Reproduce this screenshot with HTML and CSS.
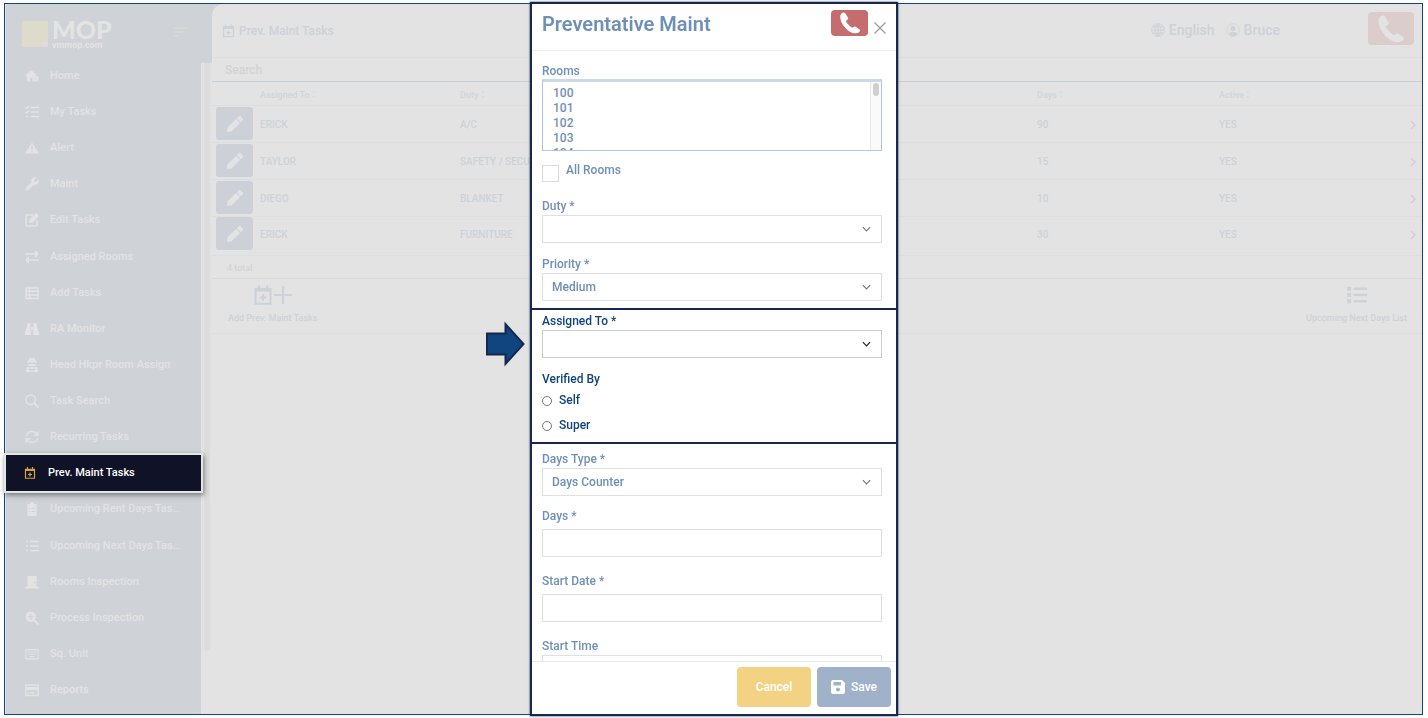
FILE: index.html
```
<!DOCTYPE html>
<html lang="en">
<head>
  <meta charset="UTF-8" />
  <title>Prev. Maint Tasks</title>
  <link rel="stylesheet" href="styles.css">
</head>
<body>

<svg class="sprite" aria-hidden="true">
  <symbol id="phone" viewBox="0 0 66 68"><path fill="currentColor" d="M8 3C12 0 17 1 19 5L27 18C28 21 27 23 24 25L20 28C24 36 32 44 40 49L45 46C47 44 50 44 53 47L63 54C66 58 62 63 56 65C48 67 40 66 34 62C18 52 5 36 3 18C2 12 4 6 8 3Z"/></symbol>
  <symbol id="pencil" viewBox="0 0 512 512"><path fill="currentColor" d="M290.7 93.2l128 128-278 278-114.1 12.6C11.4 513.5-1.6 500.6.1 485.3l12.7-114.2 277.9-277.9zm207.2-19l-60.1-60.1c-18.8-18.8-49.2-18.8-67.9 0l-56.6 56.5 128 128 56.6-56.5c18.7-18.8 18.7-49.2 0-67.9z"/></symbol>
  <symbol id="calendar" viewBox="0 0 24 24"><path fill="none" stroke="currentColor" stroke-width="2.4" d="M3 4.500h18v18H3zM7 0v5M17 0v5M12 11v8M8 15h8"/><path fill="currentColor" d="M3 4h18v4H3z"/></symbol>
  <symbol id="list" viewBox="0 0 24 20"><path fill="currentColor" d="M0 0h5v5H0zM0 7.500h5v5H0zM0 15h5v5H0zM8 1h16v3H8zM8 8.500h16v3H8zM8 16h16v3H8z"/></symbol>
  <symbol id="chevron" viewBox="0 0 10 6"><path fill="none" stroke="currentColor" stroke-width="1.300" d="M1 1l4 4 4-4"/></symbol>
  <symbol id="next" viewBox="0 0 6 10"><path fill="none" stroke="currentColor" stroke-width="1.500" d="M1 1l4 4-4 4"/></symbol>
  <symbol id="sort" viewBox="0 0 6 10"><path fill="none" stroke="currentColor" d="M1 3l2-2 2 2M1 7l2 2 2-2"/></symbol>
</svg>

<div class="app">
  <aside class="sidebar">
    <div class="brand">
      <div class="logo-mark"></div>
      <div class="logo-text"><strong>MOP</strong><span>vmmop.com</span></div>
      <svg class="menu-icon" viewBox="0 0 14 10"><path fill="none" stroke="currentColor" stroke-width="1.400" d="M0 1h14M0 5h9M0 9h5"/></svg>
    </div>
    <div class="side-body">
      <nav class="nav">
        <a href="#"><svg viewBox="0 0 16 14"><path fill="currentColor" d="M7 0L0 6.500h2V13h4V9h2v4h1.500A4 4 0 0 1 12 6.200L14 6z"/><circle cx="12" cy="10" r="3.500" fill="currentColor"/><path fill="none" stroke="#cfd2d7" d="M10.500 10l1 1 2-2"/></svg>Home</a>
        <a href="#"><svg viewBox="0 0 14 14"><path fill="none" stroke="currentColor" stroke-width="1.500" d="M5.500 2.500H14M5.500 7H14M5.500 11.500H14M.5 2.500l1 1 2.500-2.500M.5 7l1 1L4 5.500M1 11.500h2"/></svg>My Tasks</a>
        <a href="#"><svg viewBox="0 0 14 14"><path fill="currentColor" d="M7 1.500L0 12.500h14z"/><path stroke="#cfd2d7" stroke-width="1.500" d="M7 5v4M7 10v1.500"/></svg>Alert</a>
        <a href="#"><svg viewBox="0 0 512 512"><path fill="currentColor" d="M507.700 109.100c-2.200-9-13.500-12.100-20.100-5.500l-74.400 74.400-67.900-11.300L334 98.900l74.400-74.400c6.600-6.600 3.400-17.900-5.700-20.200-47.400-11.700-99.600.9-136.600 37.900-39.600 39.600-50.600 97.100-34.100 147.200L18.700 402.800c-25 25-25 65.500 0 90.500s65.500 25 90.500 0l213.200-213.200c50.100 16.700 107.500 5.700 147.400-34.200 37.100-37.100 49.700-89.300 37.900-136.800zM64 472a24 24 0 1 1 0-48 24 24 0 0 1 0 48z"/></svg>Maint</a>
        <a href="#"><svg viewBox="0 0 14 14"><path fill="none" stroke="currentColor" stroke-width="1.600" d="M8 2H2.500Q1 2 1 3.500v8Q1 13 2.500 13h8Q12 13 12 11.500V7.500"/><path fill="currentColor" d="M11 0l3 3-6.500 6.500L4 10l.5-3.500z"/></svg>Edit Tasks</a>
        <a href="#"><svg viewBox="0 0 14 14"><path fill="none" stroke="currentColor" stroke-width="1.700" d="M0 4h11M3 10h11"/><path fill="currentColor" d="M10 0l4 4-4 4zM4 6l-4 4 4 4z"/></svg>Assigned Rooms</a>
        <a href="#"><svg viewBox="0 0 14 14"><path fill="none" stroke="currentColor" stroke-width="1.400" d="M1 2h12v10.500H1zM1 5.300h12M1 9h12M4.500 2v10.500"/></svg>Add Tasks</a>
        <a href="#"><svg viewBox="0 0 14 14"><path fill="currentColor" d="M2.500 1h3v2.500L6 13H0v-2.500L2 4zM8.500 1h3v3l2.500 6.500V13H8l.5-9.500zM6 5h2v3H6z"/></svg>RA Monitor</a>
        <a href="#"><svg viewBox="0 0 14 14"><path fill="currentColor" d="M4.500 0h5l1 3H12v1.500H2V3h1.500zM3.500 6h7v2h-7zM2 9h10l1 5H1z"/><path stroke="#cfd2d7" d="M5 9l1 5M9 9l-1 5M3 11.500h8"/></svg>Head Hkpr Room Assign</a>
        <a href="#"><svg viewBox="0 0 14 14"><circle cx="5.700" cy="5.700" r="4.700" fill="none" stroke="currentColor" stroke-width="1.500"/><path stroke="currentColor" stroke-width="1.700" d="M9.200 9.200L13.500 13.500"/></svg>Task Search</a>
        <a href="#"><svg viewBox="0 0 14 14"><path fill="none" stroke="currentColor" stroke-width="1.600" d="M1.500 6A5.500 5 0 0 1 12 4.500M12.500 8A5.500 5 0 0 1 2 9.500"/><path fill="currentColor" d="M13.500 1v5h-5zM.5 13V8h5z"/></svg>Recurring Tasks</a>
        <a href="#" class="active"><svg><use href="#calendar"/></svg>Prev. Maint Tasks</a>
        <a href="#"><svg viewBox="0 0 14 14"><path fill="currentColor" d="M2.500 2H5a2 2 0 0 1 4 0h2.500v12h-9z"/><path stroke="#cfd2d7" d="M6.500 6.500H10M6.500 9.500H10M4 6.500h1M4 9.500h1"/></svg>Upcoming Rent Days Tas…</a>
        <a href="#"><svg viewBox="0 0 14 14"><path fill="none" stroke="currentColor" stroke-width="1.500" d="M5 2.500h9M5 7h9M5 11.500h9M1 2.500h2M1 7h2M1 11.500h2"/></svg>Upcoming Next Days Tas…</a>
        <a href="#"><svg viewBox="0 0 14 14"><path fill="currentColor" d="M2.500 1h9v11H14v1.500H0V12h2.500z"/><circle cx="9.500" cy="7.500" r=".8" fill="#cfd2d7"/></svg>Rooms Inspection</a>
        <a href="#"><svg viewBox="0 0 14 14"><circle cx="5.700" cy="5.700" r="5.200" fill="currentColor"/><path stroke="currentColor" stroke-width="2" d="M9 9l4.500 4.500"/><path stroke="#cfd2d7" stroke-width="1.300" d="M3 5.700h5.400M5.700 3v5.400"/></svg>Process Inspection</a>
        <a href="#"><svg viewBox="0 0 16 14"><path fill="none" stroke="currentColor" stroke-width="1.300" d="M1 2h14v10.500H1z"/><path stroke="currentColor" stroke-width="1.500" d="M3 5h2M7 5h2M11 5h2M4 7.300h2M7 7.300h2M10 7.300h2M5 10h6"/></svg>Sq. Unit</a>
        <a href="#"><svg viewBox="0 0 14 14"><path fill="none" stroke="currentColor" stroke-width="1.300" d="M.7 2h12.600v10.500H.7zM2.500 10h2M6 10h3"/><path fill="currentColor" d="M1 4h12v3H1z"/></svg>Reports</a>
      </nav>
      <div class="side-scroll"></div>
    </div>
  </aside>

  <main class="content">
    <header class="topbar">
      <h2><svg><use href="#calendar"/></svg>Prev. Maint Tasks</h2>
      <div class="user">
        <svg viewBox="0 0 14 14"><path fill="none" stroke="currentColor" d="M7 .6a6.400 6.400 0 1 0 0 12.800A6.400 6.400 0 0 0 7 .6zM.6 7h12.800M1.500 3.800h11M1.500 10.200h11M7 .6v12.800M7 .6C3 4 3 10 7 13.400M7 .6c4 3.400 4 9.400 0 12.800"/></svg>
        <span>English</span>
        <svg viewBox="0 0 14 14"><circle cx="7" cy="7" r="6.300" fill="none" stroke="currentColor" stroke-width=".8"/><circle cx="7" cy="5.300" r="2.500" fill="currentColor"/><path fill="currentColor" d="M2.700 11C4 8 10 8 11.300 11 9 13.500 5 13.500 2.700 11z"/></svg>
        <span>Bruce</span>
      </div>
      <button class="call" aria-label="Call"><svg><use href="#phone"/></svg></button>
    </header>
    <input class="search" type="text" placeholder="Search" aria-label="Search">
    <table class="tasks">
      <thead>
        <tr>
          <th class="col-edit"></th>
          <th class="col-assigned">Assigned To <svg><use href="#sort"/></svg></th>
          <th>Duty <svg><use href="#sort"/></svg></th>
          <th class="col-days">Days <svg><use href="#sort"/></svg></th>
          <th class="col-active">Active <svg><use href="#sort"/></svg></th>
          <th class="col-next"></th>
        </tr>
      </thead>
      <tbody>
        <tr><td><button class="edit" aria-label="Edit"><svg><use href="#pencil"/></svg></button></td><td>ERICK</td><td>A/C</td><td>90</td><td>YES</td><td><svg class="next"><use href="#next"/></svg></td></tr>
        <tr><td><button class="edit" aria-label="Edit"><svg><use href="#pencil"/></svg></button></td><td>TAYLOR</td><td>SAFETY / SECURITY</td><td>15</td><td>YES</td><td><svg class="next"><use href="#next"/></svg></td></tr>
        <tr><td><button class="edit" aria-label="Edit"><svg><use href="#pencil"/></svg></button></td><td>DIEGO</td><td>BLANKET</td><td>10</td><td>YES</td><td><svg class="next"><use href="#next"/></svg></td></tr>
        <tr><td><button class="edit" aria-label="Edit"><svg><use href="#pencil"/></svg></button></td><td>ERICK</td><td>FURNITURE</td><td>30</td><td>YES</td><td><svg class="next"><use href="#next"/></svg></td></tr>
      </tbody>
    </table>
    <div class="total">4 total</div>
    <div class="actions">
      <a href="#"><span class="icons"><svg><use href="#calendar"/></svg><svg viewBox="0 0 18 18"><path stroke="currentColor" stroke-width="2" d="M9 1v16M1 9h16"/></svg></span>Add Prev. Maint Tasks</a>
      <a href="#"><span class="icons"><svg><use href="#list"/></svg></span>Upcoming Next Days List</a>
    </div>
  </main>
</div>

<div class="overlay">
  <form class="modal" role="dialog" aria-labelledby="modalTitle">
    <header class="modal-head">
      <h1 id="modalTitle">Preventative Maint</h1>
      <button type="button" class="call" aria-label="Call"><svg><use href="#phone"/></svg></button>
      <button type="button" class="close" aria-label="Close"><svg viewBox="0 0 12 12"><path stroke="currentColor" stroke-width="1.200" d="M.5.5l11 11M11.500.5l-11 11"/></svg></button>
    </header>

    <div class="modal-body">
      <div class="section first">
        <label for="rooms">Rooms</label>
        <div class="listbox">
          <select id="rooms" multiple>
            <option>100</option><option>101</option><option>102</option><option>103</option><option>104</option>
            <option>105</option><option>106</option><option>107</option><option>108</option><option>109</option>
            <option>110</option><option>111</option><option>112</option><option>113</option><option>114</option>
            <option>115</option><option>116</option><option>117</option><option>118</option><option>119</option>
            <option>120</option><option>121</option><option>122</option><option>123</option>
          </select>
          <div class="list-scroll"></div>
        </div>
        <div class="check"><input type="checkbox" id="allRooms"><label for="allRooms">All Rooms</label></div>
        <div class="field">
          <label for="duty">Duty *</label>
          <div class="pick"><select id="duty"><option></option></select><svg><use href="#chevron"/></svg></div>
        </div>
        <div class="field">
          <label for="priority">Priority *</label>
          <div class="pick"><select id="priority"><option>Medium</option></select><svg><use href="#chevron"/></svg></div>
        </div>
      </div>

      <div class="section highlight">
        <svg class="arrow" viewBox="0 0 39 46"><path fill="#10457f" stroke="#16284e" stroke-width="2" d="M1 12.500h18.500V3L37.500 23l-18 20V33.500H1z"/></svg>
        <div class="field">
          <label for="assigned">Assigned To *</label>
          <div class="pick"><select id="assigned"><option></option></select><svg><use href="#chevron"/></svg></div>
        </div>
        <fieldset>
          <legend>Verified By</legend>
          <div class="radio"><input type="radio" name="verified" id="self"><label for="self">Self</label></div>
          <div class="radio"><input type="radio" name="verified" id="super"><label for="super">Super</label></div>
        </fieldset>
      </div>

      <div class="section last">
        <div class="field">
          <label for="daysType">Days Type *</label>
          <div class="pick"><select id="daysType"><option>Days Counter</option></select><svg><use href="#chevron"/></svg></div>
        </div>
        <div class="field wide">
          <label for="days">Days *</label>
          <input type="text" id="days">
        </div>
        <div class="field wide">
          <label for="startDate">Start Date *</label>
          <input type="text" id="startDate">
        </div>
        <div class="field">
          <label for="startTime">Start Time</label>
          <input type="text" id="startTime">
        </div>
      </div>
    </div>

    <footer class="modal-foot">
      <button type="button" class="btn cancel">Cancel</button>
      <button type="submit" class="btn save"><svg viewBox="0 0 14 14"><path fill="currentColor" fill-rule="evenodd" d="M2 0h9l3 3v9a2 2 0 0 1-2 2H2a2 2 0 0 1-2-2V2a2 2 0 0 1 2-2zm.5 2v3.500H10V2zM7 7.500a2 2 0 1 0 0 4 2 2 0 0 0 0-4z"/></svg>Save</button>
    </footer>
  </form>
</div>

</body>
</html>
```
FILE: styles.css
```
* { box-sizing: border-box; }
body { margin: 0; background: #fff; font-family: Roboto, "Liberation Sans", sans-serif; font-weight: 500; font-size: 12px; line-height: 16px; }
button, input, select { font: inherit; color: inherit; }
button { padding: 0; border: none; cursor: pointer; }
a { color: inherit; text-decoration: none; }
h1, h2 { margin: 0; font-weight: 500; }
svg { display: block; flex: none; }
.sprite { position: absolute; width: 0; height: 0; }

/* page */
.app { display: flex; height: calc(100vh - 6px); margin: 3px 5px 3px 4px; border: 1px solid #10467f; background: #e3e3e3; color: #cdd2d9; }
.sidebar { display: flex; flex-direction: column; width: 207px; padding-left: 1px; color: #e3e3e3; }
.brand { display: flex; align-items: flex-start; height: 59px; padding: 14px 24px 0 16px; background: #cfd2d7; }
.logo-mark { width: 26px; height: 26px; margin: 3px 4px 0 0; background: linear-gradient(#dcdcdc, #dcdcdc) right bottom / 6px 6px no-repeat, #dfdbca; }
.logo-text { display: flex; flex-direction: column; flex: 1; font-size: 9px; line-height: 10px; font-weight: 700; }
.logo-text strong { font-family: Lato, sans-serif; font-size: 25px; line-height: 22px; font-weight: 900; }
.menu-icon { width: 14px; height: 10px; margin-top: 9px; color: #dedac4; }
.side-body { display: flex; flex: 1; min-height: 0; }
.nav { display: flex; flex-direction: column; width: 195px; padding-bottom: 6px; background: #cfd2d7; font-size: 11px; }
.nav a { display: flex; flex: 1; align-items: center; gap: 11px; padding-left: 19px; white-space: nowrap; }
.nav a:first-child { flex: none; height: 31px; padding-bottom: 5px; }
.nav svg { width: 14px; height: 14px; }
.nav .active { gap: 12px; padding-left: 18px; background: #101228; color: #fff; outline: 2px solid #e4e4e4; box-shadow: 1px 2px 5px 2px #777; z-index: 1; }
.nav .active svg { width: 12px; color: #d5a43b; }
.side-scroll { width: 6px; height: 588px; margin-left: 3px; border-radius: 0 0 3px 3px; background: #dcdcdc; }

.content { flex: 1; min-width: 0; position: relative; }
.content::before { content: ""; position: absolute; top: 0; left: 0; width: 12px; height: 12px; background: #cfd2d7; z-index: 0; }
.topbar { position: relative; display: flex; align-items: flex-start; height: 54px; padding: 8px 8px 0 10px; border-bottom: 1px solid #dedede; border-radius: 12px 0 0 0; background: #e3e3e3; }
.topbar h2 { display: flex; gap: 4px; align-items: center; flex: 1; padding-top: 10px; font-size: 12px; line-height: 18px; }
.topbar h2 svg { width: 13px; height: 14px; }
.user { display: flex; align-items: center; gap: 4px; margin-right: 88px; padding-top: 9px; font-size: 14px; line-height: 18px; }
.user svg { width: 14px; height: 14px; }
.user span + svg { margin-left: 7px; }
.call { display: flex; align-items: center; justify-content: center; width: 46px; height: 33px; border-radius: 4px; background: #dbcdcc; color: #e3e3e3; }
.call svg { width: 28px; height: 28px; }
.search { display: block; width: 100%; height: 24px; padding: 0 13px; border: none; border-bottom: 1px solid #c9d1d8; background: none; outline: none; }
.search::placeholder { color: #d2d3d5; opacity: 1; }

.tasks { width: 100%; table-layout: fixed; border-collapse: collapse; font-size: 10px; line-height: 12px; }
.tasks th, .tasks td { padding: 0; text-align: left; font-weight: 500; white-space: nowrap; border-bottom: 1px solid #dedede; }
.tasks th { height: 23px; padding-top: 4px; font-size: 9px; color: #d3d4d6; }
.tasks th svg { display: inline-block; width: 4px; height: 7px; }
.tasks td { height: 37px; padding-top: 2px; }
.tasks td:first-child { padding: 0 0 0 4px; }
.tasks tbody tr:last-child td { height: 39px; padding-bottom: 4px; }
.col-edit { width: 48px; }
.col-assigned { width: 200px; }
.col-days { width: 182px; }
.col-active { width: 191px; }
.col-next { width: 12px; }
.edit { display: flex; align-items: center; justify-content: center; width: 37px; height: 33px; border-radius: 3px; background: #cdd1d7; color: #e3e3e3; }
.edit svg { width: 16px; height: 16px; }
.next { width: 6px; height: 10px; }
.total { height: 23px; padding: 5px 15px; border-bottom: 1px solid #dadada; font-size: 9px; line-height: 14px; color: #d3d4d6; }
.actions { display: flex; justify-content: space-between; padding: 6px 15px 8px 16px; border-bottom: 1px solid #dedede; font-size: 9px; line-height: 14px; }
.actions a { display: flex; flex-direction: column; align-items: center; gap: 5px; }
.icons { display: flex; align-items: center; height: 21px; }
.icons svg { width: 20px; height: 20px; }

/* dialog */
.overlay { position: fixed; inset: 2px 0; display: flex; justify-content: center; z-index: 2; }
.modal { display: flex; flex-direction: column; width: 368px; border: 2px solid #17284e; box-shadow: 0 0 2px #17284e; background: #fff; color: #6f90b6; }
.modal-head { display: flex; align-items: flex-start; gap: 6px; height: 47px; padding: 6px 10px 0 10px; border-bottom: 1px solid #eee; }
.modal-head h1 { flex: 1; font-size: 20px; line-height: 28px; font-weight: 600; }
.modal-head .call { width: 37px; height: 26px; background: #c56c6e; color: #fff; }
.modal-head .call svg { width: 22px; height: 22px; }
.close { width: 12px; height: 12px; margin-top: 12px; background: none; color: #999; }
.modal-body { flex: 1; min-height: 0; overflow: visible; clip-path: inset(0 -60px); }
.section { padding: 0 14px 0 10px; }
.section label { display: block; }
.first { padding-top: 12px; padding-bottom: 7px; }
.listbox { position: relative; border: 1px solid #b5c3d8; border-top: 3px solid #ccd8e4; }
.listbox select { display: block; width: 100%; height: 68px; padding: 0; border: none; background: #fff; outline: none; scrollbar-width: none; }
.listbox option { min-height: 0; padding: 0 10px 1px; font-weight: 500; }
.listbox option:first-child { padding-top: 4px; }
.list-scroll { position: absolute; top: 0; right: 0; bottom: 0; width: 11px; padding: 1px 2px; border-left: 1px solid #e8e8e8; background: #fafafa; }
.list-scroll::before { content: ""; display: block; width: 6px; height: 13px; border-radius: 3px; background: #d0d0d0; }
.check { display: flex; gap: 7px; height: 47px; padding-top: 11px; }
.check input { appearance: none; width: 17px; height: 17px; margin: 3px 0 0; border: 1px solid #d9d9d9; }
.field { margin-bottom: 13px; }
.first .field:last-child { margin-bottom: 0; }
.last .field { margin-bottom: 12px; }
.last .wide { margin-bottom: 16px; }
.pick { position: relative; margin-top: 1px; }
.pick select, .field input { display: block; width: 100%; height: 28px; padding: 0 9px; border: 1px solid #dde1e5; border-radius: 0; background: #fff; appearance: none; outline: none; }
.pick svg { position: absolute; right: 11px; top: 11px; width: 9px; height: 6px; color: #777; pointer-events: none; }
.field input { margin-top: 1px; }
.wide input { margin-top: 5px; }
.highlight { position: relative; border: solid #17284e; border-width: 2px 0; padding-top: 3px; padding-bottom: 9px; color: #10437f; }
.highlight select { border-color: #c9ced2; }
.highlight .pick svg { color: #222; }
.arrow { position: absolute; left: -46px; top: 11px; width: 39px; height: 46px; }
fieldset { margin: 0; padding: 0; border: none; }
legend { padding: 0; margin-bottom: 5px; }
.radio { display: flex; align-items: center; gap: 7px; }
.radio + .radio { margin-top: 9px; }
.radio input { appearance: none; width: 10px; height: 10px; margin: 2px 0 0; border: 1px solid #777; border-radius: 50%; }
.last { padding-top: 7px; }
.modal-foot { display: flex; justify-content: flex-end; gap: 6px; padding: 5px 5px 7px; border-top: 1px solid #e8eaec; background: #fff; z-index: 1; }
.btn { display: flex; align-items: center; justify-content: center; gap: 6px; width: 74px; height: 40px; border-radius: 4px; color: #fff; }
.btn svg { width: 14px; height: 14px; }
.cancel { background: #f4d284; }
.save { background: #9fb2ca; }
```
